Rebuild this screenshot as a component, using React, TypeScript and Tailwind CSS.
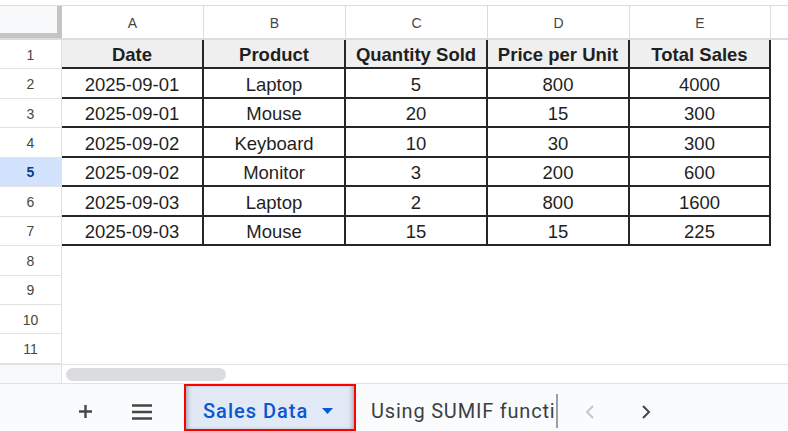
import React from 'react'

const columns = ['A', 'B', 'C', 'D', 'E']
const widths = ['w-[142px]', 'w-[142px]', 'w-[142px]', 'w-[142px]', 'w-[141px]']

const header = ['Date', 'Product', 'Quantity Sold', 'Price per Unit', 'Total Sales']
const rows = [
  ['2025-09-01', 'Laptop', '5', '800', '4000'],
  ['2025-09-01', 'Mouse', '20', '15', '300'],
  ['2025-09-02', 'Keyboard', '10', '30', '300'],
  ['2025-09-02', 'Monitor', '3', '200', '600'],
  ['2025-09-03', 'Laptop', '2', '800', '1600'],
  ['2025-09-03', 'Mouse', '15', '15', '225'],
]

function RowHeader({ n, active }: { n: number; active?: boolean }) {
  return (
    <div
      className={`w-[62px] shrink-0 flex items-center justify-center pt-[2px] border-r border-b border-[#e1e1e1] text-[14px] ${
        active ? 'bg-[#d3e3fd] text-[#0b3d91] font-bold' : 'bg-white text-[#444746]'
      }`}
    >
      {n}
    </div>
  )
}

export default function App() {
  return (
    <div className="w-[788px] h-[431px] bg-white flex flex-col overflow-hidden font-['Liberation_Sans',Arial,sans-serif] text-[#1f1f1f]">
      <div className="h-[5px] shrink-0" />

      {/* Column letters */}
      <div className="h-[35px] shrink-0 flex border-t border-b-2 border-[#dadce0]">
        <div className="w-[62px] shrink-0 bg-[#f8f9fa] border-r-[5px] border-b-[5px] border-[#c4c4c4]" />
        {columns.map((c, i) => (
          <div
            key={c}
            className={`${widths[i]} shrink-0 flex items-center justify-center pt-[2px] border-r border-[#dadce0] text-[14px] text-[#444746]`}
          >
            {c}
          </div>
        ))}
        <div className="flex-1" />
      </div>

      {/* Row 1: table header */}
      <div className="h-[29.45px] shrink-0 flex">
        <RowHeader n={1} />
        {header.map((h, i) => (
          <div
            key={h}
            className={`${widths[i]} shrink-0 flex items-center justify-center pt-[3px] bg-[#efefef] border-r-2 border-b-2 border-[#262626] text-[18.5px] font-bold`}
          >
            {h}
          </div>
        ))}
        <div className="flex-1" />
      </div>

      {/* Data rows */}
      {rows.map((r, ri) => (
        <div key={ri} className="h-[29.45px] shrink-0 flex">
          <RowHeader n={ri + 2} active={ri + 2 === 5} />
          {r.map((v, i) => (
            <div
              key={i}
              className={`${widths[i]} shrink-0 flex items-center justify-center pt-[3px] bg-white border-r-2 border-b-2 border-[#262626] text-[18.5px]`}
            >
              {v}
            </div>
          ))}
          <div className="flex-1" />
        </div>
      ))}

      {/* Empty rows */}
      {[8, 9, 10, 11].map((n) => (
        <div key={n} className="h-[29.45px] shrink-0 flex">
          <RowHeader n={n} />
          <div className="flex-1" />
        </div>
      ))}

      {/* Horizontal scroll */}
      <div className="h-[19px] shrink-0 flex border-t border-[#e1e1e1]">
        <div className="w-[62px] shrink-0 bg-[#f8f9fa] border-r border-[#e1e1e1]" />
        <div className="ml-[4px] mt-[3px] w-[160px] h-[13px] rounded-full bg-[#dadce0]" />
      </div>

      {/* Sheet tabs */}
      <div className="flex-1 flex items-center bg-[#f9fbfd] border-t border-[#e1e1e1] font-['Roboto',sans-serif]">
        <svg className="ml-[78px] mt-[9px] w-[15px] h-[15px]" viewBox="0 0 15 15">
          <path d="M7.5 1v13M1 7.5h13" stroke="#444746" strokeWidth="2.4" />
        </svg>
        <svg className="ml-[39px] mt-[9px] w-[20px] h-[16px]" viewBox="0 0 20 16">
          <path d="M0 1.5h20M0 8h20M0 14.5h20" stroke="#444746" strokeWidth="2.4" />
        </svg>
        <div className="ml-[32px] w-[172px] self-stretch pt-[8px] border-2 border-[#ff0000] bg-[#e1e9f7] flex items-center shadow-[inset_4px_0_4px_-2px_rgba(60,64,67,0.35),inset_-4px_0_4px_-2px_rgba(60,64,67,0.35)]">
          <span className="ml-[17px] text-[20px] font-medium tracking-[0.05em] text-[#0b57d0]">Sales Data</span>
          <svg className="ml-[14px] w-[11px] h-[6px]" viewBox="0 0 11 6">
            <path d="M0 0h11L5.5 6z" fill="#0b57d0" />
          </svg>
        </div>
        <span className="ml-[15px] mt-[8px] text-[20px] tracking-[0.04em] text-[#3c4043] whitespace-nowrap">Using SUMIF functi</span>
        <div className="ml-[1px] mt-[8px] w-[1.5px] h-[34px] bg-[#9aa0a6]" />
        <svg className="ml-[27px] mt-[9px] w-[10px] h-[14px]" viewBox="0 0 10 14">
          <path d="M8 1L2 7l6 6" fill="none" stroke="#c4c7c5" strokeWidth="2" />
        </svg>
        <svg className="ml-[46px] mt-[9px] w-[10px] h-[14px]" viewBox="0 0 10 14">
          <path d="M2 1l6 6-6 6" fill="none" stroke="#444746" strokeWidth="2" />
        </svg>
      </div>
    </div>
  )
}
